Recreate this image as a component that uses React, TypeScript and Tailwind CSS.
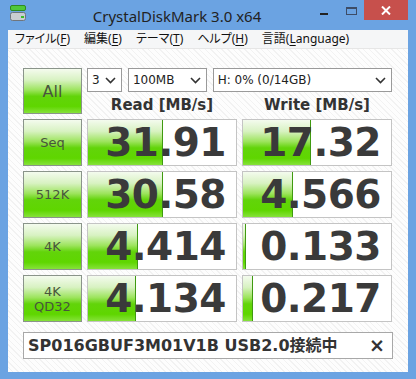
import React from 'react';

const GREEN_GRAD =
  'bg-[linear-gradient(to_bottom,#f4fbee_0%,#d8f2c2_25%,#9ce45c_48%,#62d40a_62%,#5fd600_85%,#86e23a_100%)]';

const ROWS = [
  { label: ['Seq'], read: '31.91', readW: 75, write: '17.32', writeW: 68 },
  { label: ['512K'], read: '30.58', readW: 75, write: '4.566', writeW: 50 },
  { label: ['4K'], read: '4.414', readW: 50, write: '0.133', writeW: 3 },
  { label: ['4K', 'QD32'], read: '4.134', readW: 48, write: '0.217', writeW: 10 },
];

const MENU = [
  { pre: 'ファイル(', key: 'F', post: ')' },
  { pre: '編集(', key: 'E', post: ')' },
  { pre: 'テーマ(', key: 'T', post: ')' },
  { pre: 'ヘルプ(', key: 'H', post: ')' },
  { pre: '言語(', key: 'L', post: 'anguage)' },
];

const Chevron = () => (
  <svg width="11" height="7" viewBox="0 0 11 7" className="shrink-0">
    <path d="M1 1l4.5 4.5L10 1" fill="none" stroke="#333" strokeWidth="1.6" />
  </svg>
);

const Select: React.FC<{ text: string; w: string }> = ({ text, w }) => (
  <div
    className={`${w} h-[24px] bg-white border border-[#9a9a9a] flex items-center justify-between pl-[4px] pr-[5px] text-[12px] text-[#222]`}
  >
    <span>{text}</span>
    <Chevron />
  </div>
);

const TestButton: React.FC<{ lines: string[]; big?: boolean }> = ({ lines, big }) => (
  <div
    className={`${GREEN_GRAD} border border-[#8a948a] flex flex-col items-center justify-center text-[#48553c] leading-[15px] ${
      big ? 'text-[16px]' : 'text-[13px]'
    }`}
  >
    {lines.map((l) => (
      <span key={l}>{l}</span>
    ))}
  </div>
);

const ResultBox: React.FC<{ value: string; barW: number }> = ({ value, barW }) => (
  <div className="relative bg-white border border-[#c4c4c4] flex items-center justify-end pr-[10px] overflow-hidden">
    <div
      className={`absolute left-0 top-0 bottom-0 ${GREEN_GRAD} border-r border-[#3f9a10]`}
      style={{ width: barW }}
    />
    <span className="relative font-bold text-[39px] leading-none tracking-[-0.5px] text-[#3a3a3a]">{value}</span>
  </div>
);

export default function App() {
  return (
    <div
      className="w-[416px] h-[379px] bg-[#6ba3e2] flex flex-col"
      style={{ fontFamily: '"DejaVu Sans", "Noto Sans CJK JP", sans-serif' }}
    >
      {/* title bar */}
      <div className="h-[30px] shrink-0 flex items-start relative">
        <svg width="16" height="17" viewBox="0 0 16 17" className="ml-[10px] mt-[5px]">
          <rect x="0.5" y="0.5" width="15" height="5" rx="1.5" fill="#4fc83a" stroke="#2f8a22" />
          <rect x="0.5" y="7.5" width="15" height="8" rx="2" fill="#c9cdd2" stroke="#6f757c" />
          <rect x="11" y="11" width="3" height="2" fill="#3bbf2a" />
        </svg>
        <div
          className="flex-1 text-center text-[15px] text-[#222] mt-[5px] pl-[8px]"
          style={{ fontFamily: '"Noto Sans", sans-serif' }}
        >
          CrystalDiskMark 3.0 x64
        </div>
        <div className="w-[8px] h-[2px] bg-[#222] mt-[13px] mr-[18px]" />
        <div className="w-[11px] h-[8px] border border-[#3d4c66] border-t-2 mt-[7px] mr-[7px]" />
        <div className="w-[44px] h-[20px] bg-[#c7504c] flex items-center justify-center mr-[8px]">
          <svg width="10" height="9" viewBox="0 0 10 9">
            <path d="M1 0.5l8 8M9 0.5l-8 8" stroke="#fff" strokeWidth="2" />
          </svg>
        </div>
      </div>

      <div className="flex-1 mx-[8px] mb-[7px] flex flex-col">
        {/* menu bar */}
        <div
          className="h-[19px] bg-[#f5f6f7] border-b border-[#e6e6e6] flex items-center pl-[7px] gap-[14px] text-[12px] text-[#111] [font-feature-settings:'palt']"
          style={{ fontFamily: '"Noto Sans", "Noto Sans CJK JP", sans-serif' }}
        >
          {MENU.map((m) => (
            <span key={m.pre} className="leading-none">
              {m.pre}
              <span className="underline underline-offset-2">{m.key}</span>
              {m.post}
            </span>
          ))}
        </div>

        {/* body */}
        <div className="flex-1 bg-[repeating-linear-gradient(45deg,#fdfdfd_0px,#fdfdfd_3px,#f2f2f2_3px,#f2f2f2_4px)] pl-[15px] pt-[19px] flex flex-col">
          <div className="grid grid-cols-[59px_150px_150px] grid-rows-[46px_47px_47px_47px_47px] gap-[5px]">
            <TestButton lines={['All']} big />
            <div className="col-span-2 flex flex-col">
              <div className="flex gap-[6px]">
                <Select text="3" w="w-[35px]" />
                <Select text="100MB" w="w-[79px]" />
                <Select text="H: 0% (0/14GB)" w="w-[180px]" />
              </div>
              <div className="flex-1 flex gap-[5px] items-center pt-[2px] text-[15px] font-bold text-[#333]">
                <span className="w-[150px] text-center">Read [MB/s]</span>
                <span className="w-[150px] text-center">Write [MB/s]</span>
              </div>
            </div>
            {ROWS.map((r) => (
              <React.Fragment key={r.read}>
                <TestButton lines={r.label} />
                <ResultBox value={r.read} barW={r.readW} />
                <ResultBox value={r.write} barW={r.writeW} />
              </React.Fragment>
            ))}
          </div>

          <div className="mt-[10px] w-[370px] h-[27px] bg-white border border-[#a8a8a8] flex items-center justify-between pl-[4px] pr-[7px]">
            <span className="font-bold text-[16px] text-[#333]">SP016GBUF3M01V1B USB2.0接続中</span>
            <span className="font-bold text-[19px] text-[#333]">×</span>
          </div>
        </div>
      </div>
    </div>
  );
}
